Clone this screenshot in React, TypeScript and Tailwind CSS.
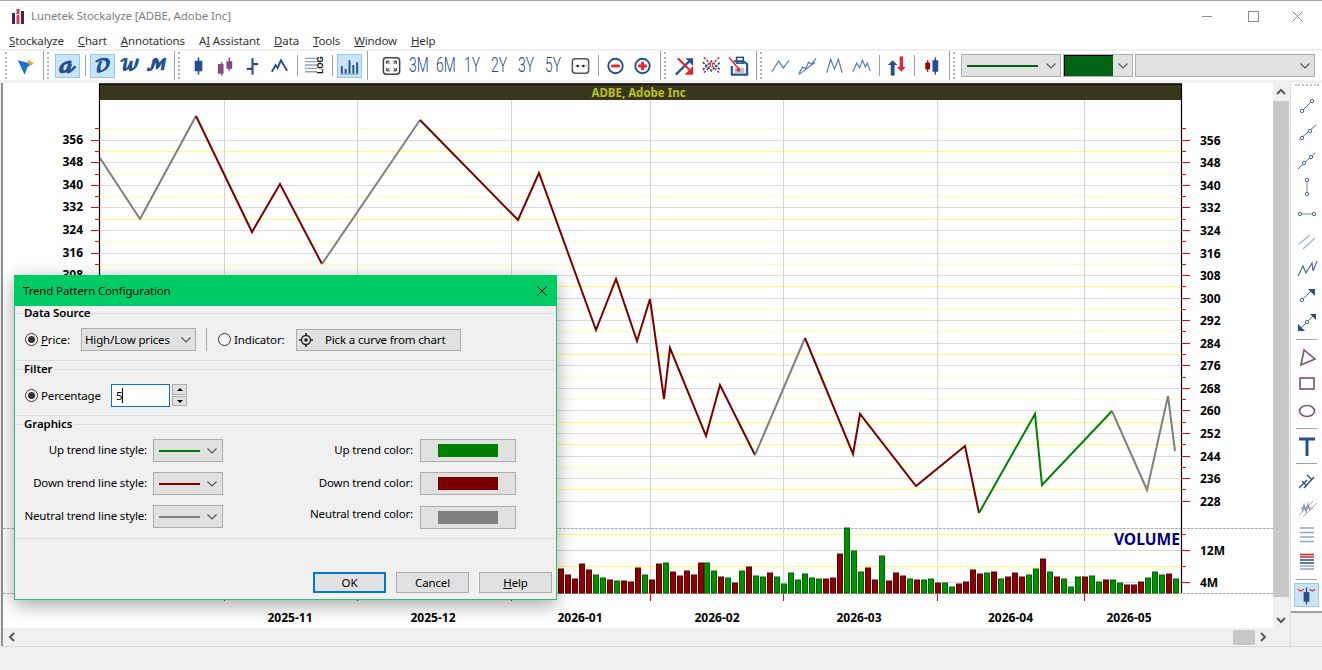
import React from "react";

const B = "#24508f";
const P = "#7a4f80";
const RD = "#e8262a";

type IP = { children: React.ReactNode };
const Ic = ({ children }: IP) => (
  <svg width="24" height="24" viewBox="0 0 24 24" fill="none">
    {children}
  </svg>
);

const Slot = ({ active, children }: { active?: boolean; children: React.ReactNode }) => (
  <div className="flex h-[29px] w-[27px] shrink-0 items-center justify-center">
    <div
      className={
        "flex h-[24px] w-[25px] items-center justify-center border " +
        (active ? "border-[#90c8f6] bg-[#cce4f7]" : "border-transparent")
      }
    >
      {children}
    </div>
  </div>
);

const Sep = () => (
  <div className="flex h-[29px] w-[8px] shrink-0 justify-center pl-0 items-center">
    <div className="h-[21px] w-[1px] bg-[#a0a0a0]" />
  </div>
);

const Grip = ({ pad }: { pad: string }) => (
  <div className={"h-[27px] w-[2px] shrink-0 border-l-2 border-dotted border-[#b4b4b4] " + pad} />
);

const Letter = ({ t, size }: { t: string; size: string }) => (
  <span className={"font-['DejaVu_Math_TeX_Gyre','Liberation_Serif',serif] font-bold leading-none text-[#24508f] " + size}>{t}</span>
);

const Period = ({ t }: { t: string }) => (
  <span className="inline-block scale-x-[0.66] font-['Roboto',sans-serif] text-[21px] font-light leading-none text-[#1d4a8c]">
    {t}
  </span>
);

const Chev = ({ color = "#555" }: { color?: string }) => (
  <svg width="10" height="6" viewBox="0 0 10 6" fill="none">
    <path d="M0.5 0.5 L5 5 L9.5 0.5" stroke={color} strokeWidth="1.1" />
  </svg>
);

const Scroll = ({ d }: { d: string }) => (
  <svg width="10" height="10" viewBox="0 0 10 10" fill="none">
    <path d={d} stroke="#5a5a5a" strokeWidth="2" />
  </svg>
);

/* ---------- toolbar icons ---------- */
const IArrow = () => (
  <Ic>
    <path d="M4 6 L19 10 L14 13 L11 21Z" fill="#1a6fd6" />
    <path d="M16 5 L17.5 8 L21 8.5 L18.5 11 L16 11 L14 8.5Z" fill="#f0a030" />
  </Ic>
);
const ICandle = () => (
  <Ic>
    <path d="M12 3V21" stroke={B} strokeWidth="1.6" />
    <rect x="8" y="6.5" width="8" height="11" fill={B} />
  </Ic>
);
const ICandle2 = () => (
  <Ic>
    <path d="M8 8V22M16 3V17" stroke={P} strokeWidth="1.6" />
    <rect x="4" y="10" width="6" height="10" fill={P} />
    <rect x="13" y="7" width="6" height="8" fill={P} />
  </Ic>
);
const IStep = () => (
  <Ic>
    <path d="M12 4V21M6 15H12M12 10H18" stroke={B} strokeWidth="2.2" />
  </Ic>
);
const ILine = () => (
  <Ic>
    <path d="M4 18 L8 11 L10 14 L13.5 6 L20 17" stroke={B} strokeWidth="2" />
  </Ic>
);
const ILog = () => (
  <Ic>
    <path d="M2 4H15M2 7.5H15M2 11H15M2 14.5H15M2 18H15" stroke="#8aa3c4" strokeWidth="1.4" />
    <text
      x="0"
      y="0"
      transform="translate(20.5,20) rotate(-90)"
      fontSize="8.5"
      fontWeight="700"
      fill="#111"
      fontFamily="Liberation Sans, sans-serif"
    >
      LOG
    </text>
  </Ic>
);
const IBars = () => (
  <Ic>
    <path d="M4 12V20M8 15V20M12 6V20M16 11V20M20 8V20" stroke={B} strokeWidth="2" />
    <path d="M2.5 20.5H21.5" stroke="#8aa3c4" strokeWidth="1" />
  </Ic>
);
const IFull = () => (
  <Ic>
    <rect x="3.5" y="3.5" width="17" height="17" rx="3" stroke="#444" strokeWidth="1.6" />
    <path d="M7 7L10 10M7 7V10M7 7H10M17 7L14 10M17 7V10M17 7H14M7 17L10 14M7 17V14M7 17H10M17 17L14 14M17 17V14M17 17H14" stroke="#222" strokeWidth="1" />
  </Ic>
);
const IFit = () => (
  <Ic>
    <rect x="3.5" y="4.5" width="17" height="15" rx="3" stroke="#555" strokeWidth="1.6" />
    <path d="M3 12H21" stroke="#bbb" strokeWidth="0.8" />
    <circle cx="9" cy="12" r="1.4" fill="#222" />
    <circle cx="15" cy="12" r="1.4" fill="#222" />
  </Ic>
);
const IMinus = () => (
  <Ic>
    <circle cx="12" cy="12" r="7.5" stroke={B} strokeWidth="2" />
    <path d="M7.5 12H16.5" stroke={RD} strokeWidth="3" />
  </Ic>
);
const IPlus = () => (
  <Ic>
    <circle cx="12" cy="12" r="7.5" stroke={B} strokeWidth="2" />
    <path d="M7.5 12H16.5M12 7.5V16.5" stroke={RD} strokeWidth="3" />
  </Ic>
);
const ITrendX = () => (
  <Ic>
    <path d="M3 21 L17 7" stroke={B} strokeWidth="2.4" />
    <path d="M13 4 H21 V12Z" fill={B} />
    <path d="M5 4 L17 16" stroke={RD} strokeWidth="2.2" />
    <path d="M21 21 H12 L21 12Z" fill={RD} />
  </Ic>
);
const IMesh = () => (
  <Ic>
    <path d="M3 8 L12 17 L21 8M3 16 L12 7 L21 16" stroke={B} strokeWidth="1.8" strokeDasharray="2.5 1.2" />
    <path d="M4 3 L21 20M20 3 L3 20" stroke={RD} strokeWidth="1.6" strokeDasharray="2.5 1.5" />
  </Ic>
);
const ISave = () => (
  <Ic>
    <path d="M7 7H17L21 10V21H5V12" stroke={B} strokeWidth="2.2" />
    <rect x="10" y="3" width="7" height="6" stroke={B} strokeWidth="1.6" />
    <rect x="8" y="14" width="10" height="6" fill="#b0c4de" />
    <path d="M2 3 L13 16" stroke={RD} strokeWidth="1.6" />
    <path d="M14 18 L9 17 L13 13Z" fill={RD} />
  </Ic>
);
const Tr = ({ d }: { d: string }) => (
  <Ic>
    <path d={d} stroke="#5b7fb0" strokeWidth="1.3" />
  </Ic>
);
const IUpDown = () => (
  <Ic>
    <path d="M8 9V22" stroke={B} strokeWidth="4" />
    <path d="M3 11L8 6L13 11Z" fill={B} />
    <path d="M17 2V14" stroke={RD} strokeWidth="3.4" />
    <path d="M12.5 13H21.5L17 18Z" fill={RD} />
  </Ic>
);
const ICandleRB = () => (
  <Ic>
    <path d="M8 6V18" stroke="#9a1010" strokeWidth="1.4" />
    <rect x="5.5" y="8.5" width="5" height="7" fill="#a00000" />
    <path d="M16 3V21" stroke={B} strokeWidth="1.4" />
    <rect x="13" y="6" width="6" height="12" fill={B} />
  </Ic>
);

/* ---------- drawing tool icons ---------- */
const Dot = ({ x, y }: { x: number; y: number }) => (
  <circle cx={x} cy={y} r="1.7" fill="#f4f6fa" stroke="#4a6a9a" strokeWidth="1" />
);
const L = (d: string, c = "#4a6a9a", w = 1) => <path d={d} stroke={c} strokeWidth={w} />;

const tools: React.ReactNode[] = [
  <Ic key="1">{L("M7 17L17 7")}<Dot x={7} y={17} /><Dot x={17} y={7} /></Ic>,
  <Ic key="2">{L("M4 19L21 4")}<Dot x={7} y={17} /><Dot x={15} y={10} /></Ic>,
  <Ic key="3">{L("M3 21L20 5")}<Dot x={9} y={15} /><Dot x={16} y={9} /></Ic>,
  <Ic key="4">{L("M12 6V18", "#a8b4c8", 1.6)}<Dot x={12} y={5} /><Dot x={12} y={19} /></Ic>,
  <Ic key="5">{L("M5 12H19", "#a8b4c8", 1.6)}<Dot x={5} y={12} /><Dot x={19} y={12} /></Ic>,
  <Ic key="6">{L("M4 15L15 6M8 20L20 9", "#a8b4c8", 1.2)}</Ic>,
  <Ic key="7">{L("M3 20L8 10L11 17L17 7L18 15L22 5", "#4a6a9a", 1.2)}</Ic>,
  <Ic key="8">{L("M7 17L17 7")}<path d="M13 6H20V13Z" fill="#2b4d80" /><Dot x={7} y={17} /></Ic>,
  <Ic key="9">{L("M5 19L19 5")}<path d="M15 4H21V10Z" fill="#2b4d80" /><path d="M3 14V21H10Z" fill="#2b4d80" /><Dot x={12} y={12} /></Ic>,
  "sep",
  <Ic key="10"><path d="M6 20L9 5L20 14Z" stroke={P} strokeWidth="1.6" /></Ic>,
  <Ic key="11"><rect x="5" y="6" width="14" height="11" stroke={P} strokeWidth="1.6" fill="none" /></Ic>,
  <Ic key="12"><ellipse cx="12" cy="12" rx="7.5" ry="5.5" stroke={P} strokeWidth="1.6" /></Ic>,
  "sep",
  <Ic key="13"><path d="M4 5H20M12 5V22" stroke={B} strokeWidth="3" /></Ic>,
  "sep",
  <Ic key="14">{L("M4 19L12 11M9 19L19 8M7 12L12 17M12 6L17 11", "#2b4d80", 1.3)}</Ic>,
  <Ic key="15">{L("M4 19L18 5M8 21L22 7", "#e59a9a", 1)}{L("M7 16L9 9L11 16L13 8L15 15M6 12H18", "#8095b5", 1.2)}</Ic>,
  <Ic key="16">{L("M5 5H19M5 9.5H19M5 14H19M5 18.5H19", "#8fa6c8", 1.7)}</Ic>,
  <Ic key="17">
    {L("M5 4.5H19M5 7H19", "#d4262a", 1.3)}
    {L("M5 10H19M5 13H19", "#2b4d80", 1.3)}
    {L("M5 16H19M5 19H19", "#8fa6c8", 1.7)}
  </Ic>,
  "sep",
];

/* ---------- chart data ---------- */
const segs: [string, number[]][] = [
  ["#808080", [100, 158, 140, 219, 196, 116]],
  ["#7a0000", [196, 116, 252, 232, 280, 184, 322, 264]],
  ["#808080", [322, 264, 420, 120]],
  ["#7a0000", [420, 120, 518, 220, 539, 173, 596, 330, 616, 279, 637, 341, 650, 299, 664, 399, 670, 348, 706, 436, 720, 385, 755, 455]],
  ["#808080", [755, 455, 805, 338]],
  ["#7a0000", [805, 338, 853, 454, 860, 414, 916, 486, 965, 446, 979, 513]],
  ["#008000", [979, 513, 1035, 414, 1042, 485, 1112, 411]],
  ["#808080", [1112, 411, 1147, 490, 1168, 396, 1175, 451]],
];
const pts = (a: number[]) => a.reduce<string[]>((o, v, i) => (i % 2 ? o : [...o, `${v},${a[i + 1]}`]), []).join(" ");

const labels = [356, 348, 340, 332, 324, 316, 308, 300, 292, 284, 276, 268, 260, 252, 244, 236, 228];
const yOf = (i: number) => 139.7 + i * 22.56;
const strong = new Set([1, 4, 7, 10, 13, 14, 16]);
const vgrid = [224, 357.5, 511, 650.5, 783.5, 937.5, 1084.5];
const vol = [
  177, 195, 207, 162, 180, -195, -204, 210, -213, 213, 216, 174, -195, 210, 162, -159, 186, 198, 183, 195, 159, -159, -183, 201, -204, 219, -183, 171, -198, -201, 189, -201, -222, -189, -210, -192, -204, -207, 207, 204, 132, -54, -123, -186, 174, 210, -138,
  213, 189, 198, -207, 210, -210, -207, 219, -219, -231, 222, 216, 180, 192, -189, 186, -207, 201, 189, 201, -195, -177, 147, -186, 201, -207, -231, -201, 201, -198, -216, 210, -210, -219, 225, 225, 216, -204, -186, -195, 192, -207,
];
const months: [string, number][] = [
  ["2025-11", 290],
  ["2025-12", 433],
  ["2026-01", 580],
  ["2026-02", 717],
  ["2026-03", 859],
  ["2026-04", 1010.5],
  ["2026-05", 1129],
];

const Chart = () => (
  <svg width="1270" height="545" viewBox="3 83 1270 545" className="block shrink-0 bg-white font-['Noto_Sans',sans-serif]" shapeRendering="auto">
    {labels.map((_, i) => (
      <g key={i}>
        <path d={`M100 ${Math.round(yOf(i)) + 0.5}H1181`} stroke="#dcdcdc" />
        <path d={`M100 ${Math.round(yOf(i) - 11.28) + 0.5}H1181`} stroke={strong.has(i) ? "#ffff66" : "#ffffb8"} />
      </g>
    ))}
    {vgrid.map((x) => (
      <path key={x} d={`M${Math.floor(x) + 0.5} 100V593`} stroke="#d6d6d6" />
    ))}
    <path d="M3 528.5H1273M3 593.5H1273" stroke="#b0b0b0" strokeDasharray="3 1" />
    <path d="M100 534.5H1181M100 566.5H1181" stroke="#ffff66" />
    <path d="M100 550.5H1181M100 582.5H1181" stroke="#d8d8d8" />
    {segs.map(([c, a], i) => (
      <polyline key={i} points={pts(a)} fill="none" stroke={c} strokeWidth="2" />
    ))}
    {vol.map((v, i) => {
      const top = 510 + Math.abs(v) / 3;
      const x = 560.3 + (i * (1175 - 560.3)) / (vol.length - 1);
      return (
        <rect
          key={i}
          x={Math.round(x - 2.5) + 0.5}
          y={top}
          width="5"
          height={593 - top}
          fill={v < 0 ? "#009000" : "#8f0000"}
          stroke={v < 0 ? "#006400" : "#5c0000"}
        />
      );
    })}
    <rect x="99" y="84" width="1083" height="16" fill="#38361c" />
    <path d="M99 84H1182" stroke="#000" strokeWidth="1.5" />
    <path d="M99.5 84V593M1181.5 84V593" stroke="#000" strokeWidth="1.2" />
    <text x="638.5" y="96.5" textAnchor="middle" fontSize="11.5" fontWeight="700" fill="#b9c21f">
      ADBE, Adobe Inc
    </text>
    {labels.map((l, i) => {
      const y = Math.round(yOf(i)) + 0.5;
      const m = Math.round(yOf(i) - 11.28) + 0.5;
      return (
        <g key={l}>
          <path d={`M91 ${y}H99M95 ${m}H99M1182 ${y}H1190M1182 ${m}H1186`} stroke="#f00" />
          {i <= 6 && (
            <text x="83" y={y + 3.7} textAnchor="end" fontSize="12" fontWeight="700" fill="#000">
              {l}
            </text>
          )}
          <text x="1200" y={y + 4} fontSize="12" fontWeight="700" fill="#000">
            {l}
          </text>
        </g>
      );
    })}
    <path d="M1182 534.5H1186M1182 550.5H1190M1182 566.5H1186M1182 582.5H1190" stroke="#f00" />
    <text x="1200" y="554.5" fontSize="12" fontWeight="700" fill="#000">12M</text>
    <text x="1200" y="586.5" fontSize="12" fontWeight="700" fill="#000">4M</text>
    <text x="1180" y="545" textAnchor="end" fontSize="15.6" fontWeight="700" fill="#000080">VOLUME</text>
    {vgrid.map((x) => (
      <path key={x} d={`M${Math.floor(x) + 0.5} 594V601`} stroke="#f00" />
    ))}
    {months.map(([m, x]) => (
      <text key={m} x={x} y="622" textAnchor="middle" fontSize="12" fontWeight="700" fill="#000">
        {m}
      </text>
    ))}
  </svg>
);

/* ---------- dialog parts ---------- */
const Radio = ({ on }: { on?: boolean }) => (
  <span className="flex h-[13px] w-[13px] shrink-0 items-center justify-center rounded-full border border-[#333] bg-[#f6f6f6]">
    {on && <span className="h-[7px] w-[7px] rounded-full bg-[#333]" />}
  </span>
);
const Heading = ({ t }: { t: string }) => (
  <div className="flex h-[15px] items-center">
    <div className="h-[1px] w-[8px] bg-[#dcdcdc]" />
    <span className="px-[1px] pb-[2px] text-[11.5px] font-semibold leading-none tracking-[-0.1px] text-black">{t}</span>
    <div className="h-[1px] flex-1 bg-[#dcdcdc]" />
  </div>
);
const Divider = () => <div className="mb-[1px] h-[1px] bg-[#dcdcdc]" />;
const LineCombo = ({ c, className = "" }: { c: string; className?: string }) => (
  <div className={"flex h-[23px] w-[70px] shrink-0 items-center border border-[#adadad] bg-[#e1e1e1] pl-[5px] pr-[4px] " + className}>
    <div className="h-[2px] w-[41px]" style={{ backgroundColor: c }} />
    <div className="ml-auto flex items-center pr-[1px]">
      <Chev />
    </div>
  </div>
);
const ColorBtn = ({ c, className = "" }: { c: string; className?: string }) => (
  <div className={"flex h-[23px] w-[96px] shrink-0 items-center justify-center border border-[#adadad] bg-[#e1e1e1] " + className}>
    <div className="h-[13px] w-[60px]" style={{ backgroundColor: c }} />
  </div>
);
const Btn = ({ children, def }: { children: React.ReactNode; def?: boolean }) => (
  <div
    className={
      "flex h-[21px] w-[73px] items-center justify-center bg-[#e1e1e1] text-black " +
      (def ? "border-2 border-[#0078d7]" : "border border-[#adadad]")
    }
  >
    {children}
  </div>
);

const Dialog = () => (
  <div className="absolute left-[14px] top-[275px] flex h-[325px] w-[543px] flex-col border border-[#2bbf7c] bg-[#f0f0f0] text-[11.5px] tracking-[-0.15px] text-black shadow-[0_5px_18px_rgba(0,0,0,0.35)]">
    <div className="-mx-[1px] -mt-[1px] flex h-[31px] shrink-0 items-center justify-between bg-[#00cc66] pl-[9px] pr-[9px]">
      <span className="text-[#0a0a0a]">Trend Pattern Configuration</span>
      <svg width="12" height="12" viewBox="0 0 12 12" fill="none">
        <path d="M1 1L11 11M11 1L1 11" stroke="#000" strokeWidth="1" />
      </svg>
    </div>
    <Heading t="Data Source" />
    <div className="flex h-[39px] items-start pl-[10px] pt-[7px]">
      <div className="flex h-[23px] items-center">
        <Radio on />
        <span className="ml-[3px] w-[40px]"><u>P</u>rice:</span>
      </div>
      <div className="flex h-[23px] w-[115px] items-center justify-between border border-[#adadad] bg-[#e1e1e1] pl-[3px] pr-[4px]">
        <span>High/Low prices</span>
        <Chev />
      </div>
      <div className="ml-[10px] h-[23px] w-[1px] bg-[#a8a8a8]" />
      <div className="ml-[11px] flex h-[23px] items-center">
        <Radio />
        <span className="ml-[3px] w-[62px]">Indicator:</span>
      </div>
      <div className="mt-[1px] flex h-[22px] w-[165px] items-center border border-[#adadad] bg-[#e1e1e1] pl-[1px]">
        <svg width="16" height="16" viewBox="0 0 16 16" fill="none" className="shrink-0">
          <circle cx="8" cy="8" r="4.5" stroke="#222" strokeWidth="1.4" />
          <circle cx="8" cy="8" r="1.8" fill="#222" />
          <path d="M8 1V3.5M8 12.5V15M1 8H3.5M12.5 8H15" stroke="#222" strokeWidth="1.6" />
        </svg>
        <span className="ml-[11px]">Pick a curve from chart</span>
      </div>
    </div>
    <Divider />
    <Heading t="Filter" />
    <div className="flex h-[38px] items-start pl-[10px] pt-[7px]">
      <div className="flex h-[23px] items-center">
        <Radio on />
        <span className="ml-[3px] w-[70px]">Percentage</span>
      </div>
      <div className="flex h-[23px] w-[59px] items-center border border-[#0078d7] bg-white pl-[4px]">
        <span>5</span>
        <span className="h-[15px] w-[1px] bg-black" />
      </div>
      <div className="ml-[2px] flex h-[23px] w-[15px] flex-col gap-[1px]">
        <div className="flex h-[11px] items-center justify-center border border-[#adadad] bg-[#e1e1e1]">
          <span className="h-0 w-0 border-x-[3px] border-b-[3px] border-x-transparent border-b-black" />
        </div>
        <div className="flex h-[10px] items-center justify-center border border-[#adadad] bg-[#e1e1e1]">
          <span className="h-0 w-0 border-x-[3px] border-t-[3px] border-x-transparent border-t-black" />
        </div>
      </div>
    </div>
    <Divider />
    <Heading t="Graphics" />
    <div className="flex h-[106px] pt-[7px]">
      <div className="flex w-[208px] flex-col gap-[10px]">
        {[
          ["Up trend line style:", "#008000"],
          ["Down trend line style:", "#7a0000"],
          ["Neutral trend line style:", "#808080"],
        ].map(([t, c]) => (
          <div key={t} className="flex h-[23px] items-center justify-end gap-[6px]">
            <span className="whitespace-nowrap pb-[2px]">{t}</span>
            <LineCombo c={c} />
          </div>
        ))}
      </div>
      <div className="flex w-[293px] flex-col">
        {[
          ["Up trend color:", "#008000", "", "pb-[2px]"],
          ["Down trend color:", "#7a0000", "mt-[10px]", "pb-[2px]"],
          ["Neutral trend color:", "#808080", "mt-[11px]", "pb-[8px]"],
        ].map(([t, c, m, p]) => (
          <div key={t} className={"flex h-[23px] items-center justify-end gap-[7px] " + m}>
            <span className={"whitespace-nowrap " + p}>{t}</span>
            <ColorBtn c={c} />
          </div>
        ))}
      </div>
    </div>
    <Divider />
    <div className="flex justify-end gap-[10px] pr-[4px] pt-[32px]">
      <Btn def>OK</Btn>
      <Btn>Cancel</Btn>
      <Btn><span><u>H</u>elp</span></Btn>
    </div>
  </div>
);

const menu = [
  ["S", "tockalyze"],
  ["C", "hart"],
  ["A", "nnotations"],
  ["", "AI Assistant"],
  ["D", "ata"],
  ["T", "ools"],
  ["W", "indow"],
  ["H", "elp"],
];

export default function App() {
  return (
    <div className="relative flex h-[670px] w-[1322px] flex-col overflow-hidden bg-[#f0f0f0] font-['Noto_Sans',sans-serif]">
      {/* title bar */}
      <div className="flex h-[31px] shrink-0 items-center justify-between border-t border-[#a9a9a9] bg-white pl-[11px]">
        <div className="flex items-center gap-[6px]">
          <svg width="14" height="16" viewBox="0 0 14 16">
            <rect x="1" y="5" width="3" height="11" fill="#3d2a55" />
            <rect x="5.5" y="1" width="3" height="15" fill="#d23a55" />
            <rect x="10" y="3" width="3" height="13" fill="#5a2030" />
            <path d="M4 9 L7 6 L10 9" stroke="#fff" strokeWidth="1" fill="none" />
          </svg>
          <span className="text-[11.5px] tracking-[-0.1px] text-[#808080]">Lunetek Stockalyze [ADBE, Adobe Inc]</span>
        </div>
        <div className="flex">
          <div className="flex h-[30px] w-[46px] items-center justify-center">
            <div className="h-[1px] w-[10px] bg-[#8c8c8c]" />
          </div>
          <div className="flex h-[30px] w-[46px] items-center justify-center">
            <div className="h-[11px] w-[11px] border border-[#8c8c8c]" />
          </div>
          <div className="flex h-[30px] w-[46px] items-center justify-center pr-[4px]">
            <svg width="11" height="11" viewBox="0 0 11 11" fill="none">
              <path d="M0.5 0.5L10.5 10.5M10.5 0.5L0.5 10.5" stroke="#8c8c8c" />
            </svg>
          </div>
        </div>
      </div>
      {/* menu */}
      <div className="flex h-[18px] shrink-0 items-center gap-[14px] bg-white pl-[9px] pt-[2px] text-[11.5px] tracking-[-0.15px] text-[#333]">
        {menu.map(([u, r]) => (
          <span key={r} className="whitespace-nowrap">
            {u ? (
              <>
                <u>{u}</u>
                {r}
              </>
            ) : (
              <>
                A<u>I</u> Assistant
              </>
            )}
          </span>
        ))}
      </div>
      <div className="h-[2px] shrink-0 bg-[#f0f0f0]" />
      {/* toolbar */}
      <div className="flex h-[29px] shrink-0 items-center bg-white">
        <div className="flex h-[29px] w-[44px] shrink-0 items-center border-r border-[#a0a0a0] pl-[5px]">
          <Grip pad="" />
          <div className="ml-[5px]"><Slot><IArrow /></Slot></div>
        </div>
        <div className="flex h-[29px] w-[131px] shrink-0 items-center border-r border-[#a0a0a0] pl-[3px]">
          <Grip pad="mr-[5px]" />
          <Slot active><Letter t="𝓪" size="text-[20px]" /></Slot>
          <Sep />
          <Slot active><Letter t="𝓓" size="text-[16px]" /></Slot>
          <Slot><Letter t="𝓦" size="text-[15px]" /></Slot>
          <Slot><Letter t="𝓜" size="text-[15px]" /></Slot>
        </div>
        <div className="flex h-[29px] w-[193px] shrink-0 items-center border-r border-[#a0a0a0] pl-[3px]">
          <Grip pad="mr-[5px]" />
          <Slot><ICandle /></Slot>
          <Slot><ICandle2 /></Slot>
          <Slot><IStep /></Slot>
          <Slot><ILine /></Slot>
          <Sep />
          <Slot><ILog /></Slot>
          <Sep />
          <Slot active><IBars /></Slot>
        </div>
        <div className="flex h-[29px] w-[293px] shrink-0 items-center border-r border-[#a0a0a0] pl-[10px]">
          <Slot><IFull /></Slot>
          {["3M", "6M", "1Y", "2Y", "3Y", "5Y"].map((t) => (
            <Slot key={t}><Period t={t} /></Slot>
          ))}
          <Slot><IFit /></Slot>
          <Sep />
          <Slot><IMinus /></Slot>
          <Slot><IPlus /></Slot>
        </div>
        <div className="flex h-[29px] w-[96px] shrink-0 items-center border-r border-[#a0a0a0] pl-[3px]">
          <Grip pad="mr-[5px]" />
          <Slot><ITrendX /></Slot>
          <Slot><IMesh /></Slot>
          <Slot><ISave /></Slot>
        </div>
        <div className="flex h-[29px] w-[193px] shrink-0 items-center border-r border-[#a0a0a0] pl-[3px]">
          <Grip pad="mr-[5px]" />
          <Slot><Tr d="M3 18L10 7L15 14L21 6" /></Slot>
          <Slot><Tr d="M3 20L7 13L10 15L13 8L16 10L21 4M3 21L20 8" /></Slot>
          <Slot><Tr d="M4 19L8 5L12 15L16 5L20 19" /></Slot>
          <Slot><Tr d="M3 18L7 9L10 14L13 6L16 13L18 9L21 17" /></Slot>
          <Sep />
          <Slot><IUpDown /></Slot>
          <Sep />
          <Slot><ICandleRB /></Slot>
        </div>
        <div className="flex h-[29px] flex-1 items-center gap-[2px] pl-[3px]">
          <Grip pad="mr-[4px]" />
          <div className="flex h-[23px] w-[100px] items-center justify-between border border-[#adadad] bg-[#e1e1e1] pl-[5px] pr-[4px]">
            <div className="h-[2px] w-[71px] bg-[#006414]" />
            <Chev />
          </div>
          <div className="flex h-[23px] w-[70px] items-center justify-between border border-[#adadad] bg-[#e1e1e1] pr-[4px]">
            <div className="h-[21px] w-[49px] border-l border-t border-black bg-[#006414]" />
            <Chev />
          </div>
          <div className="flex h-[23px] w-[180px] items-center justify-end border border-[#adadad] bg-[#e1e1e1] pr-[4px]">
            <Chev />
          </div>
        </div>
      </div>
      <div className="h-[3px] shrink-0" />
      {/* main */}
      <div className="flex h-[563px] shrink-0">
        <div className="ml-[1px] w-[2px] shrink-0 bg-[#8f8f8f]" />
        <div className="flex w-[1288px] shrink-0 flex-col">
          <div className="flex h-[545px]">
            <Chart />
            <div className="flex w-[16px] shrink-0 flex-col">
              <div className="flex h-[18px] items-center justify-center bg-[#f0f0f0]">
                <Scroll d="M1 7L5 3L9 7" />
              </div>
              <div className="h-[496px] bg-[#c8c8c8]" />
              <div className="flex flex-1 items-end justify-center pb-[3px]">
                <Scroll d="M1 3L5 7L9 3" />
              </div>
            </div>
            <div className="w-[2px] shrink-0 border-r border-[#dcdcdc]" />
          </div>
          <div className="flex h-[18px] items-center border-r border-[#dcdcdc] bg-[#f0f0f0]">
            <div className="ml-[4px]"><Scroll d="M7 1L3 5L7 9" /></div>
            <div className="ml-auto mr-[3px] h-[15px] w-[22px] bg-[#c8c8c8]" />
            <div className="mr-[22px]"><Scroll d="M3 1L7 5L3 9" /></div>
          </div>
        </div>
        <div className="flex h-[530px] w-[31px] shrink-0 flex-col items-center border-b-2 border-[#a0a0a0] bg-white">
          <div className="h-[9px] w-[24px] pt-[1px]">
            <div className="w-full border-t-2 border-dotted border-[#c4c4c4]" />
          </div>
          {tools.map((t, i) =>
            t === "sep" ? (
              <div key={i} className="flex h-[8px] w-full items-center justify-center">
                <div className="h-[1px] w-[21px] bg-[#a0a0a0]" />
              </div>
            ) : (
              <div key={i} className="flex h-[27px] items-center justify-center">{t}</div>
            )
          )}
          <div className="flex h-[24px] w-[25px] items-center justify-center border border-[#90c8f6] bg-[#cce4f7]">
            <Ic>
              <path d="M12 4V22" stroke="#2b4d80" strokeWidth="1.4" />
              <rect x="9" y="9" width="6" height="10" fill="#2b4d80" />
              <path d="M3 6L6 8L9 6M15 6L18 8L21 6" stroke="#d4262a" strokeWidth="1.2" fill="none" />
            </Ic>
          </div>
        </div>
      </div>
      <div className="ml-[2px] h-[1px] shrink-0 bg-[#d9d9d9]" />
      <Dialog />
    </div>
  );
}
